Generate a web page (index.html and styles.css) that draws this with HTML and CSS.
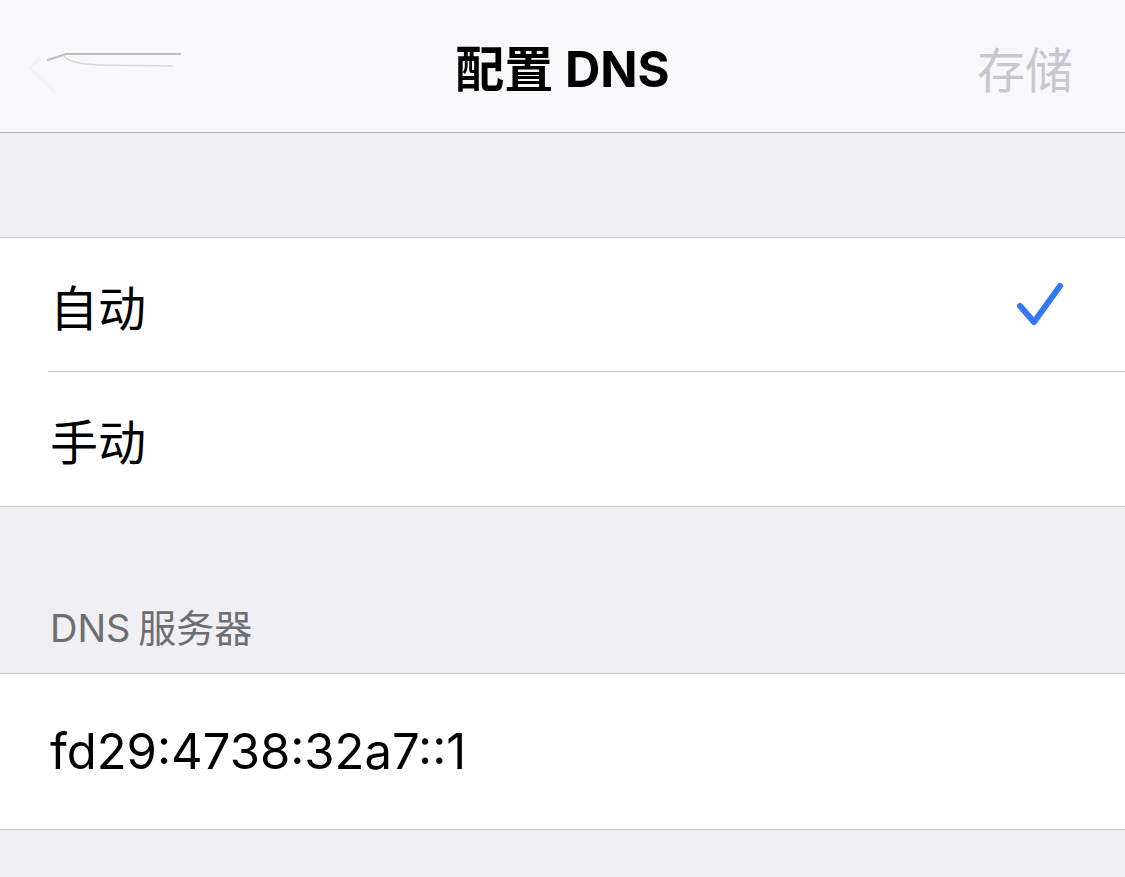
FILE: index.html
```html
<!DOCTYPE html>
<html lang="zh">
<head>
<meta charset="utf-8">
<link rel="stylesheet" href="styles.css">
</head>
<body>
<div class="screen">
  <header class="nav">
    <div class="nav-back">
      <svg width="200" height="132" viewBox="0 0 200 132">
        <path d="M48 60 L66 54 L180 54" fill="none" stroke="#bcbcbc" stroke-width="2" stroke-linecap="round"/>
        <path d="M64 56 Q70 64 100 65 L172 66" fill="none" stroke="#d8d8d8" stroke-width="1.5" stroke-linecap="round"/>
        <path d="M40 58 L30 68 L55 92" fill="none" stroke="#eef2fb" stroke-width="3" stroke-linecap="round"/>
      </svg>
    </div>
    <h1 class="nav-title">配置 DNS</h1>
    <div class="nav-save">存储</div>
  </header>

  <div class="gap gap-top"></div>

  <section class="group">
    <div class="row">
      <span class="row-label">自动</span>
      <svg class="check" width="50" height="48" viewBox="0 0 50 48">
        <path d="M4 24 L18 40 L44 4" fill="none" stroke="#3478f6" stroke-width="6" stroke-linecap="round" stroke-linejoin="round"/>
      </svg>
    </div>
    <div class="row row-last">
      <span class="row-label">手动</span>
    </div>
  </section>

  <div class="gap gap-header">
    <span class="section-header">DNS<span class="thin"> </span>服务器</span>
  </div>

  <section class="group">
    <div class="row row-tall row-last">
      <span class="row-label row-mono">fd29:4738:32a7::1</span>
    </div>
  </section>

  <div class="gap gap-bottom"></div>
</div>
</body>
</html>
```

FILE: styles.css
```css
* { box-sizing: border-box; }
html, body {
  margin: 0;
  padding: 0;
  background: #efeff4;
}
body {
  font-family: "Inter", "Noto Sans CJK SC", sans-serif;
  width: 1125px;
  height: 877px;
  overflow: hidden;
}
.screen {
  display: flex;
  flex-direction: column;
}
.nav {
  height: 133px;
  background: #f8f8fa;
  border-bottom: 1px solid #b4b4b8;
  display: flex;
  align-items: center;
  justify-content: center;
  position: relative;
}
.nav-back {
  position: absolute;
  left: 0;
  top: 0;
  height: 132px;
}
.nav-back svg { display: block; }
.nav-title {
  margin: 0;
  font-size: 49px;
  font-weight: 700;
  color: #000;
  margin-top: -2px;
}
.nav-save {
  position: absolute;
  right: 52px;
  top: 32px;
  font-size: 48px;
  color: #c7c7cc;
  font-family: "Noto Sans CJK SC", sans-serif;
}
.gap { background: #efeff4; }
.gap-top { height: 105px; border-bottom: 1px solid #c8c7cc; }
.gap-header {
  height: 168px;
  border-top: 1px solid #c8c7cc;
  border-bottom: 1px solid #c8c7cc;
  display: flex;
  align-items: flex-end;
  padding: 0 0 20px 50px;
}
.gap-bottom { flex: 1; height: 60px; border-top: 1px solid #c8c7cc; }
.section-header {
  font-size: 38px;
  color: #6d6d72;
}
.thin { font-size: 28px; }
.group {
  background: #fff;
  padding-left: 48px;
}
.row {
  height: 134px;
  display: flex;
  align-items: center;
  justify-content: space-between;
  padding-right: 60px;
  border-bottom: 1px solid #c8c7cc;
}
.row-last { border-bottom: none; height: 134px; }
.row-tall { height: 155px; }
.row-label {
  font-size: 48px;
  color: #000;
  margin-left: 2px;
}
.row-mono { font-size: 49px; }
.check { display: block; margin-top: 2px; margin-right: -1px; }
```
